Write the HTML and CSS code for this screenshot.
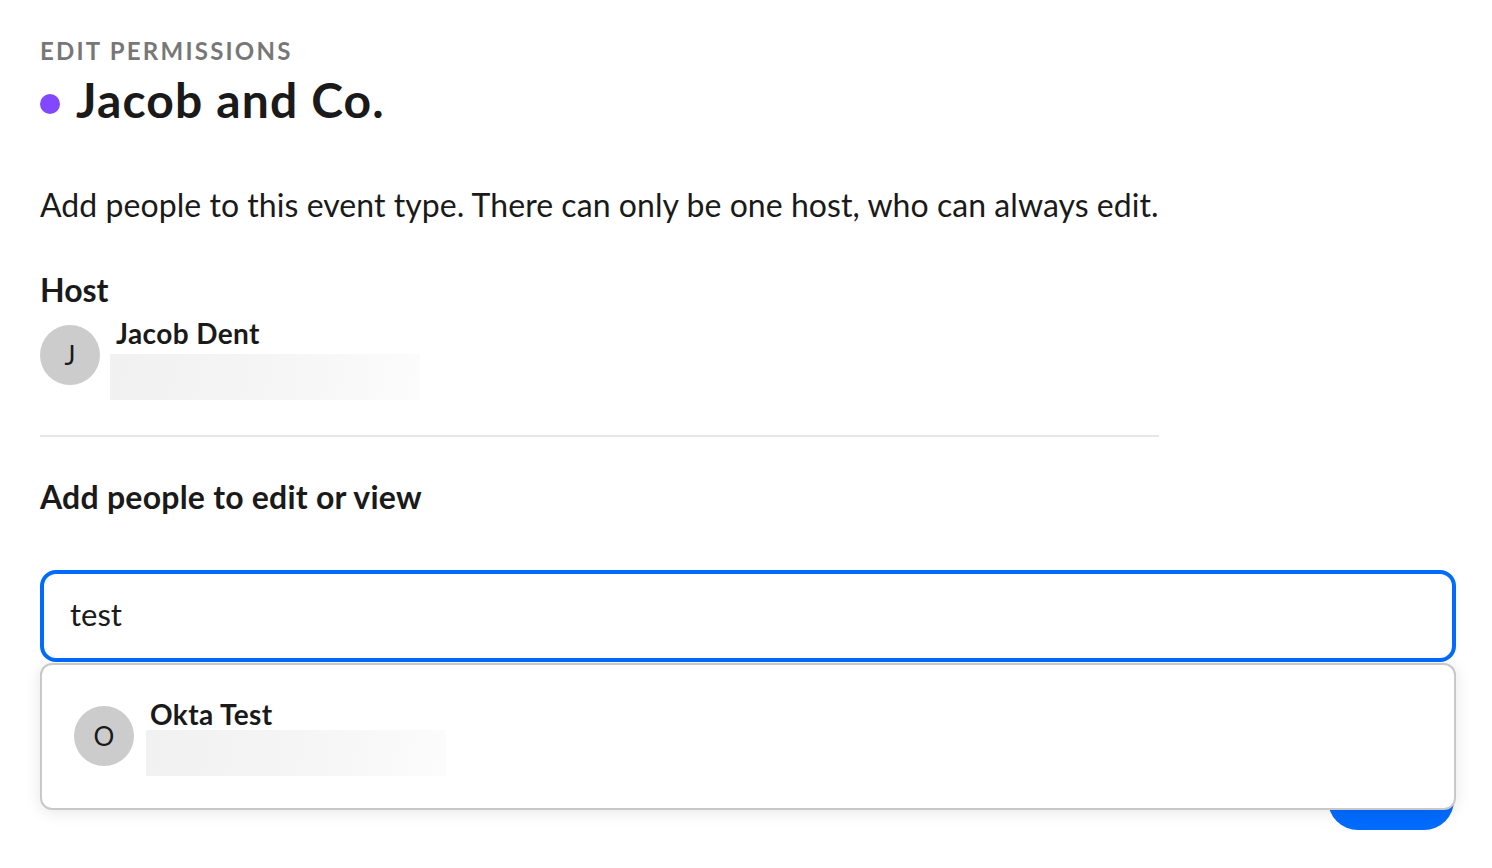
FILE: index.html
```html
<!DOCTYPE html>
<html lang="en">
<head>
<meta charset="utf-8">
<title>Edit permissions</title>
<link rel="stylesheet" href="styles.css">
</head>
<body>
<main class="page">
  <p class="eyebrow">EDIT PERMISSIONS</p>
  <h1 class="title"><span class="dot"></span>Jacob and Co.</h1>
  <p class="intro">Add people to this event type. There can only be one host, who can always edit.</p>
  <h2 class="host-label">Host</h2>
  <div class="person host-person">
    <div class="avatar">J</div>
    <div class="person-info">
      <div class="name">Jacob Dent</div>
      <div class="redact host-redact"></div>
    </div>
  </div>
  <hr class="rule">
  <h2 class="add-label">Add people to edit or view</h2>
  <div class="combo">
    <div class="input">test</div>
    <div class="dropdown">
      <div class="person">
        <div class="avatar">O</div>
        <div class="person-info">
          <div class="name">Okta Test</div>
          <div class="redact okta-redact"></div>
        </div>
      </div>
    </div>
    <div class="action-row"><button class="save" type="button" aria-label="Save"></button></div>
  </div>
</main>
</body>
</html>
```

FILE: styles.css
```css
* { box-sizing: border-box; }
html, body { margin: 0; height: 868px; overflow: hidden; background: #fff; }
body { font-family: Lato, "Open Sans", sans-serif; color: #1a1a1a; }
.page { padding: 37px 36px 0 40px; }
.eyebrow { margin: 0; height: 27px; font-size: 24px; line-height: 27px; font-weight: 700; letter-spacing: 2.22px; color: #777; }
.title { display: flex; align-items: center; margin: 11px 0 0; height: 50px; font-size: 48px; line-height: 50px; font-weight: 700; letter-spacing: 1.15px; }
.dot { width: 20px; height: 20px; margin: 8px 16px 0 0; border-radius: 50%; background: #8247ff; }
.intro { margin: 60px 0 0; height: 40px; font-size: 32px; line-height: 40px; font-weight: 400; letter-spacing: .05px; }
.host-label { margin: 47px 0 0; height: 36px; font-size: 32px; line-height: 36px; font-weight: 700; }
.person { display: flex; align-items: flex-start; }
.host-person { margin-top: 12px; }
.avatar { flex: none; width: 60px; height: 60px; margin-top: 5px; display: flex; align-items: center; justify-content: center; border-radius: 50%; background: #ccc; font-size: 26px; font-weight: 400; }
.person-info { display: flex; flex-direction: column; }
.name { height: 29px; margin-left: 16px; font-size: 28px; line-height: 27px; font-weight: 700; letter-spacing: .4px; }
.redact { height: 46px; background: linear-gradient(100deg, #f1f1f1 0%, #f5f5f5 50%, #fcfcfc 100%); }
.host-redact { width: 310px; margin: 5px 0 0 10px; }
.okta-redact { width: 300px; margin-left: 12px; }
.rule { width: 1119px; height: 2px; margin: 35px 0 0; border: 0; background: #e6e6e6; }
.add-label { margin: 41px 0 0; height: 38px; font-size: 32px; line-height: 38px; font-weight: 700; letter-spacing: .23px; }
.combo { position: relative; margin-top: 54px; }
.input { height: 92px; padding: 0 26px 4px; display: flex; align-items: center; border: 4px solid #006bff; border-radius: 16px; font-size: 31px; background: #fff; }
.dropdown { position: absolute; z-index: 2; top: 93px; left: 0; right: 0; height: 147px; padding: 36px 32px 0; background: #fff; border: 2px solid #c8c8c8; border-radius: 12px; box-shadow: 0 2px 16px rgba(0, 0, 0, .1); }
.action-row { display: flex; justify-content: flex-end; padding: 108px 2px 0 0; }
.save { width: 126px; height: 60px; padding: 0; border: 0; border-radius: 30px; background: #006bff; }
```
